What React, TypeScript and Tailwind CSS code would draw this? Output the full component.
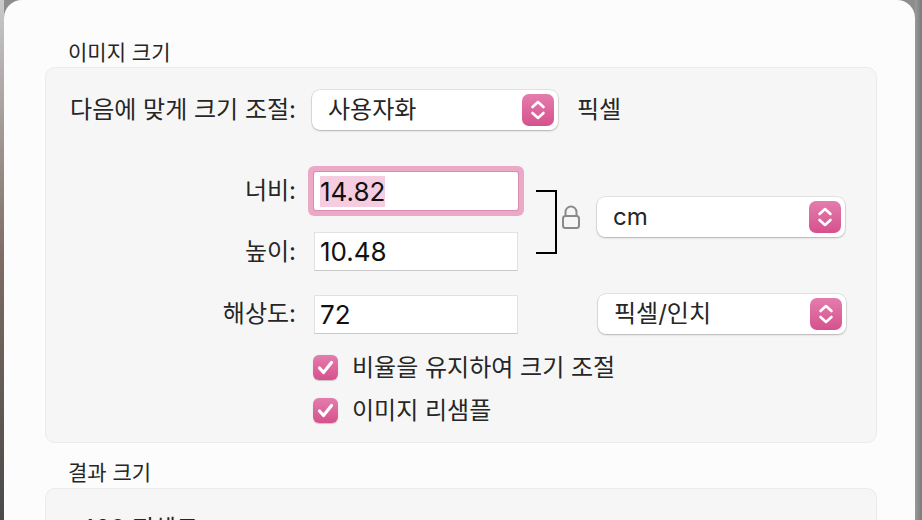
import React from 'react';

const font = { fontFamily: 'Inter, "Noto Sans CJK KR", sans-serif' };

function Stepper() {
  return (
    <div className="flex h-[32px] w-[32px] items-center justify-center rounded-[7px] bg-gradient-to-b from-[#e37dad] to-[#d6508d]">
      <svg width="32" height="32" viewBox="0 0 32 32" fill="none" stroke="white" strokeWidth="2.6" strokeLinecap="round" strokeLinejoin="round">
        <path d="M10.5 13 L16 8 L21.5 13" />
        <path d="M10.5 19 L16 24 L21.5 19" />
      </svg>
    </div>
  );
}

function Popup({ label, width }: { label: string; width: string }) {
  return (
    <div
      className={`flex h-[40px] items-center justify-between rounded-[8px] bg-white pl-[16px] pr-[4px] text-[24px] text-[#262626] shadow-[0_0_0_0.5px_rgba(0,0,0,0.14),0_1px_2px_rgba(0,0,0,0.22)] ${width}`}
    >
      <span className="leading-none">{label}</span>
      <Stepper />
    </div>
  );
}

function Field({ value, focused }: { value: string; focused?: boolean }) {
  return (
    <div
      className={
        focused
          ? 'flex h-[38px] w-[204px] items-center rounded-[2px] bg-white pl-[6px] shadow-[0_0_0_1px_#d98cb0,0_0_0_6px_#eba9c7]'
          : 'flex h-[39px] w-[204px] items-center border border-[#e1e1e1] border-b-[#c9c9c9] bg-white pl-[5px]'
      }
    >
      <span className={`text-[26px] leading-[31px] text-[#111] ${focused ? 'bg-[#f6cde0]' : ''}`}>{value}</span>
    </div>
  );
}

function Checkbox({ label }: { label: string }) {
  return (
    <div className="flex h-[43px] items-center">
      <div className="flex h-[25px] w-[25px] items-center justify-center rounded-[6px] bg-gradient-to-b from-[#e37dad] to-[#d6508d] shadow-[0_0.5px_1px_rgba(0,0,0,0.2)]">
        <svg width="25" height="25" viewBox="0 0 25 25" fill="none" stroke="white" strokeWidth="3.2" strokeLinecap="round" strokeLinejoin="round">
          <path d="M6.5 13 L10.5 17.5 L18.5 7.5" />
        </svg>
      </div>
      <span className="ml-[14px] text-[24px] text-[#262626]">{label}</span>
    </div>
  );
}

function Lock() {
  return (
    <svg width="20" height="26" viewBox="0 0 20 26" fill="none" stroke="#8a8a8a" strokeWidth="2">
      <path d="M4.5 12 V8 a5.5 5.5 0 0 1 11 0 V12" />
      <rect x="2" y="12" width="16" height="12" rx="2.5" />
    </svg>
  );
}

export default function App() {
  return (
    <div className="flex h-[520px] w-[922px] overflow-hidden bg-[#8d8d8d]" style={font}>
      <div className="w-[4px] shrink-0 bg-gradient-to-b from-[#c9c9cc] via-[#7d6c62] to-[#4a4a4a]" />
      <div className="flex w-[911px] shrink-0 flex-col rounded-t-[18px] bg-[#fcfcfc] pl-[41px] pr-[38px] pt-[40px]">
        <div className="pl-[23px] text-[21px] leading-[26px] text-[#262626]">이미지 크기</div>

        <div className="mt-[1px] flex flex-col rounded-[10px] border border-[#ebebeb] bg-[#f6f6f6] pb-[10px] pt-[22px]">
          <div className="flex items-center">
            <div className="w-[266px] pr-[16px] text-right text-[24px] text-[#262626]">다음에 맞게 크기 조절:</div>
            <Popup label="사용자화" width="w-[246px]" />
            <span className="ml-[19px] text-[24px] text-[#262626]">픽셀</span>
          </div>

          <div className="mt-[42px] flex items-start">
            <div className="flex flex-col gap-[22px]">
              <div className="flex items-center">
                <div className="w-[268px] pr-[18px] text-right text-[24px] text-[#262626]">너비:</div>
                <Field value="14.82" focused />
              </div>
              <div className="flex items-center">
                <div className="w-[268px] pr-[18px] text-right text-[24px] text-[#262626]">높이:</div>
                <Field value="10.48" />
              </div>
            </div>
            <div className="ml-[18px] mt-[18px] h-[64px] w-[21px] border-y-2 border-r-2 border-black" />
            <div className="ml-[4px] mt-[32px]">
              <Lock />
            </div>
            <div className="ml-[16px] mt-[25px]">
              <Popup label="cm" width="w-[248px]" />
            </div>
          </div>

          <div className="mt-[23px] flex items-center">
            <div className="w-[268px] pr-[18px] text-right text-[24px] text-[#262626]">해상도:</div>
            <Field value="72" />
            <div className="ml-[80px]">
              <Popup label="픽셀/인치" width="w-[248px]" />
            </div>
          </div>

          <div className="ml-[267px] mt-[12px] flex flex-col">
            <Checkbox label="비율을 유지하여 크기 조절" />
            <Checkbox label="이미지 리샘플" />
          </div>
        </div>

        <div className="mt-[17px] pl-[23px] text-[21px] leading-[26px] text-[#262626]">결과 크기</div>
        <div className="mt-[2px] flex-1 rounded-t-[10px] border border-b-0 border-[#ebebeb] bg-[#f6f6f6] pl-[34px] pt-[22px]">
          <span className="text-[24px] text-[#262626]">420 픽셀도</span>
        </div>
      </div>
      <div className="flex-1 bg-gradient-to-r from-[#9a9a9a] to-[#7a7a7a]" />
    </div>
  );
}
